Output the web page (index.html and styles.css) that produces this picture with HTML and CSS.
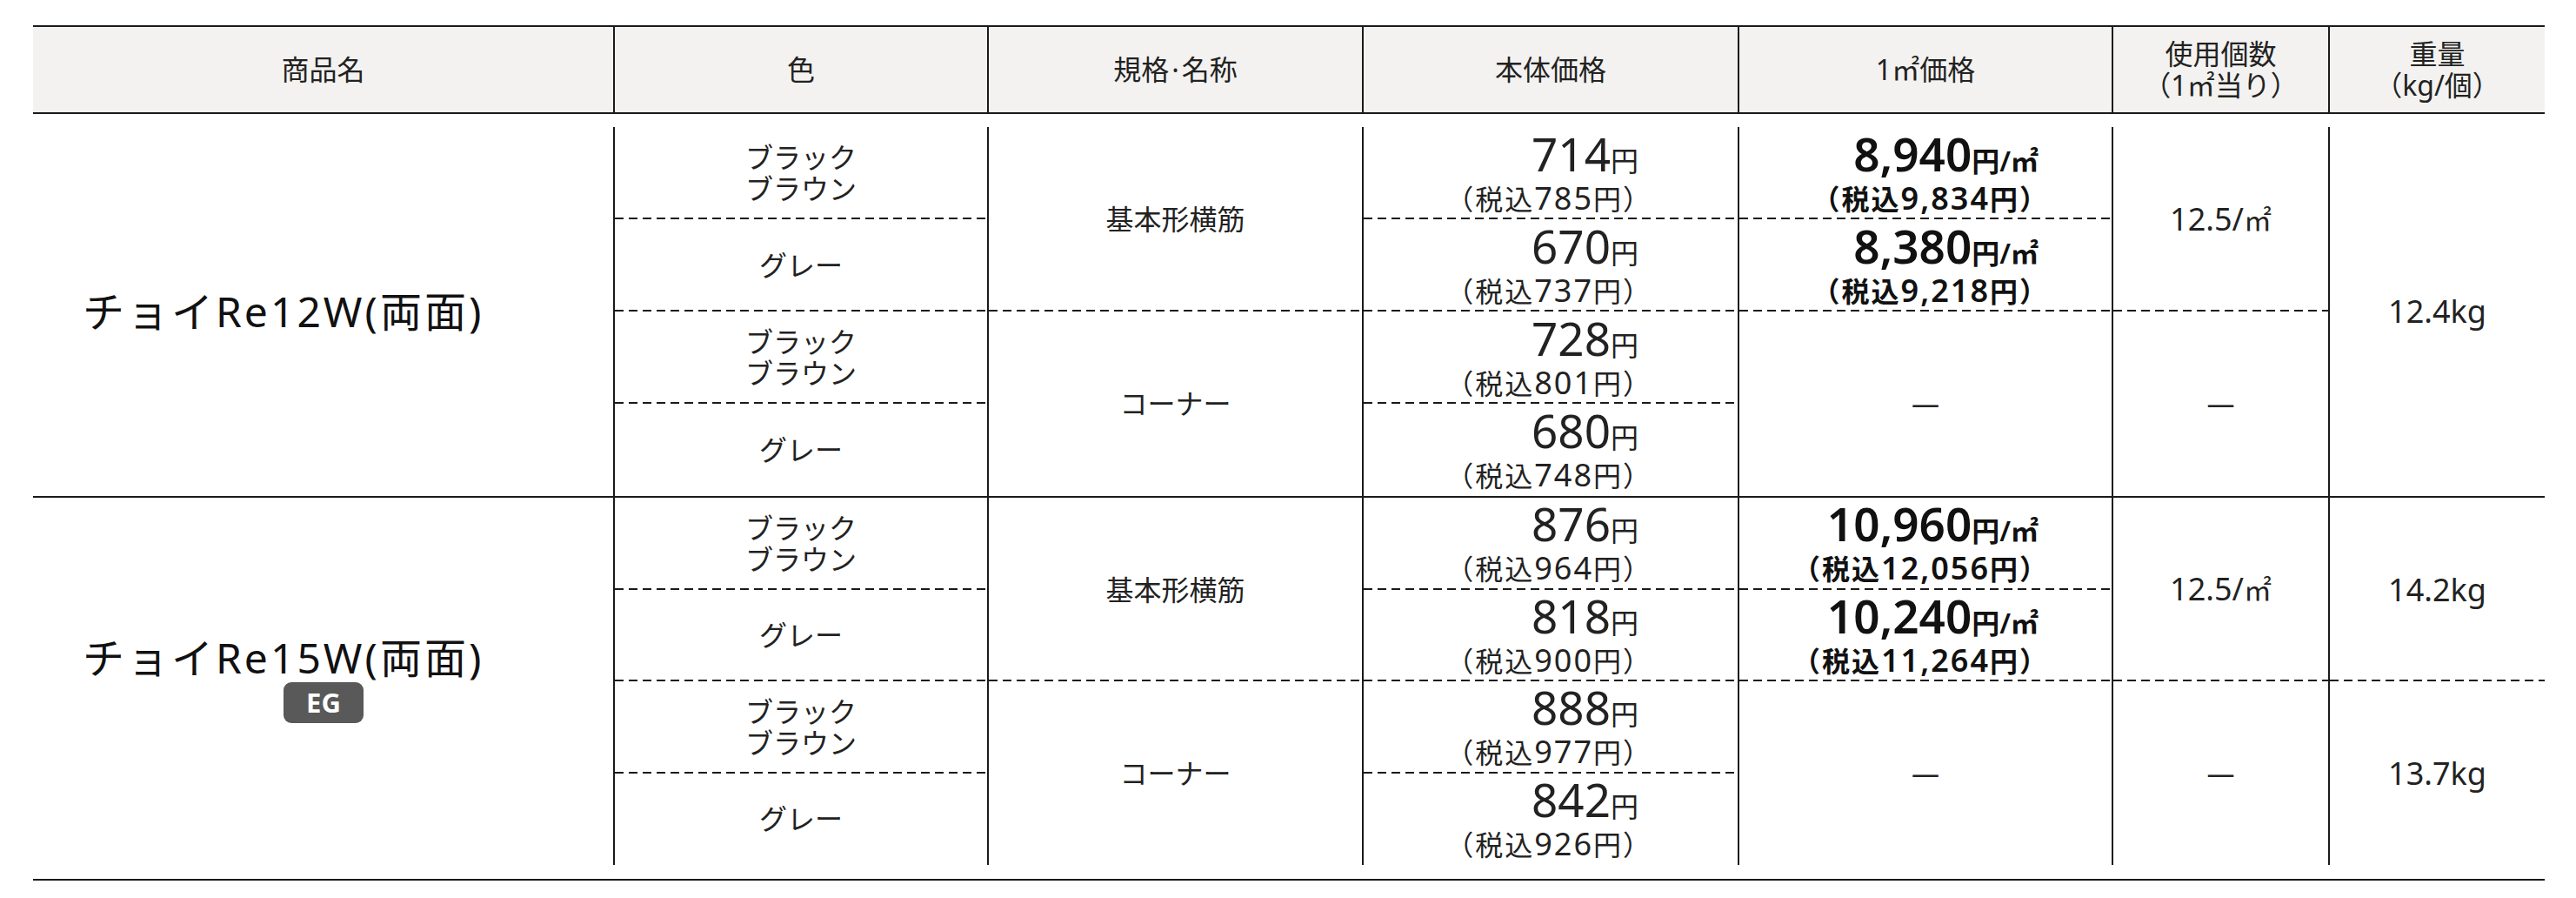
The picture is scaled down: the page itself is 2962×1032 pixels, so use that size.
FILE: index.html
```html
<!DOCTYPE html>
<html lang="ja">
<head>
<meta charset="utf-8">
<title>チョイRe 価格表</title>
<link rel="stylesheet" href="styles.css">
</head>
<body>
<div class="sheet">
  <div class="table">
    <div class="thead">
      <div class="th first"><span>商品名</span></div>
      <div class="th"><span>色</span></div>
      <div class="th"><span>規格<span class="dot">·</span>名称</span></div>
      <div class="th"><span>本体価格</span></div>
      <div class="th"><span>1㎡価格</span></div>
      <div class="th"><span>使用個数</span><span>（1㎡当り）</span></div>
      <div class="th"><span>重量</span><span>（kg/個）</span></div>
    </div>
    <div class="tbody">
      <div class="group g1">
        <div class="name c1 r14"><div class="pname">チョイRe12W(両面)</div></div>

        <div class="cell c2 r1 dash"><span>ブラック</span><span>ブラウン</span></div>
        <div class="cell c2 r2 dash"><span>グレー</span></div>
        <div class="cell c2 r3 dash"><span>ブラック</span><span>ブラウン</span></div>
        <div class="cell c2 r4"><span>グレー</span></div>

        <div class="cell c3 r12 dash"><span>基本形横筋</span></div>
        <div class="cell c3 r34"><span>コーナー</span></div>

        <div class="cell pr4 c4 r1 dash"><div class="pbox"><div class="big">714<span class="yen">円</span></div><div class="tax">（税込<span class="n">785</span>円）</div></div></div>
        <div class="cell pr4 c4 r2 dash"><div class="pbox"><div class="big">670<span class="yen">円</span></div><div class="tax">（税込<span class="n">737</span>円）</div></div></div>
        <div class="cell pr4 c4 r3 dash"><div class="pbox"><div class="big">728<span class="yen">円</span></div><div class="tax">（税込<span class="n">801</span>円）</div></div></div>
        <div class="cell pr4 c4 r4"><div class="pbox"><div class="big">680<span class="yen">円</span></div><div class="tax">（税込<span class="n">748</span>円）</div></div></div>

        <div class="cell pr5 c5 r1 dash"><div class="pbox bold"><div class="big">8,940<span class="yen">円/㎡</span></div><div class="tax">（税込<span class="n">9,834</span>円）</div></div></div>
        <div class="cell pr5 c5 r2 dash"><div class="pbox bold"><div class="big">8,380<span class="yen">円/㎡</span></div><div class="tax">（税込<span class="n">9,218</span>円）</div></div></div>
        <div class="cell c5 r34"><span>—</span></div>

        <div class="cell c6 r12 dash"><span class="v"><span class="n">12.5/</span>㎡</span></div>
        <div class="cell c6 r34"><span>—</span></div>

        <div class="cell c7 r14"><span class="n">12.4kg</span></div>
      </div>

      <div class="group g2">
        <div class="name c1 r14"><div class="pname">チョイRe15W(両面)</div><div class="badge">EG</div></div>

        <div class="cell c2 r1 dash"><span>ブラック</span><span>ブラウン</span></div>
        <div class="cell c2 r2 dash"><span>グレー</span></div>
        <div class="cell c2 r3 dash"><span>ブラック</span><span>ブラウン</span></div>
        <div class="cell c2 r4"><span>グレー</span></div>

        <div class="cell c3 r12 dash"><span>基本形横筋</span></div>
        <div class="cell c3 r34"><span>コーナー</span></div>

        <div class="cell pr4 c4 r1 dash"><div class="pbox"><div class="big">876<span class="yen">円</span></div><div class="tax">（税込<span class="n">964</span>円）</div></div></div>
        <div class="cell pr4 c4 r2 dash"><div class="pbox"><div class="big">818<span class="yen">円</span></div><div class="tax">（税込<span class="n">900</span>円）</div></div></div>
        <div class="cell pr4 c4 r3 dash"><div class="pbox"><div class="big">888<span class="yen">円</span></div><div class="tax">（税込<span class="n">977</span>円）</div></div></div>
        <div class="cell pr4 c4 r4"><div class="pbox"><div class="big">842<span class="yen">円</span></div><div class="tax">（税込<span class="n">926</span>円）</div></div></div>

        <div class="cell pr5 c5 r1 dash"><div class="pbox bold"><div class="big">10,960<span class="yen">円/㎡</span></div><div class="tax">（税込<span class="n">12,056</span>円）</div></div></div>
        <div class="cell pr5 c5 r2 dash"><div class="pbox bold"><div class="big">10,240<span class="yen">円/㎡</span></div><div class="tax">（税込<span class="n">11,264</span>円）</div></div></div>
        <div class="cell c5 r34"><span>—</span></div>

        <div class="cell c6 r12 dash"><span class="v"><span class="n">12.5/</span>㎡</span></div>
        <div class="cell c6 r34"><span>—</span></div>

        <div class="cell c7 r12 dash"><span class="n">14.2kg</span></div>
        <div class="cell c7 r34"><span class="n">13.7kg</span></div>
      </div>
    </div>
  </div>
</div>
</body>
</html>
```

FILE: styles.css
```css
* {
  box-sizing: border-box;
  margin: 0;
  padding: 0;
}

html, body {
  background: #ffffff;
}

body {
  font-family: "Noto Sans", "Noto Sans CJK JP", sans-serif;
  color: #222222;
}

.sheet {
  padding: 29px 36px 0 38px;
}

.table {
  width: 2888px;
  border-top: 2px solid #1a1a1a;
  border-bottom: 2px solid #1a1a1a;
}

.thead,
.group {
  display: grid;
  grid-template-columns: 667px 430px 431px 432px 430px 249px 249px;
}

.thead {
  height: 100px;
  background: #f3f2f0;
  border-bottom: 2px solid #1a1a1a;
}

.th {
  display: flex;
  flex-direction: column;
  align-items: center;
  justify-content: center;
  font-size: 32px;
  line-height: 36px;
  border-left: 2px solid #1a1a1a;
  white-space: nowrap;
}

.th.first {
  border-left: none;
}

.dot {
  padding: 0 3px;
}

.tbody {
  padding: 15px 0 16px;
}

.group.g1 {
  grid-template-rows: repeat(4, 106px);
  border-bottom: 2px solid #1a1a1a;
}

.group.g2 {
  grid-template-rows: repeat(4, 105.5px);
}

.c1 { grid-column: 1; }
.c2 { grid-column: 2; }
.c3 { grid-column: 3; }
.c4 { grid-column: 4; }
.c5 { grid-column: 5; }
.c6 { grid-column: 6; }
.c7 { grid-column: 7; }

.r1 { grid-row: 1; }
.r2 { grid-row: 2; }
.r3 { grid-row: 3; }
.r4 { grid-row: 4; }
.r12 { grid-row: 1 / 3; }
.r34 { grid-row: 3 / 5; }
.r14 { grid-row: 1 / 5; }

.cell {
  display: flex;
  flex-direction: column;
  align-items: center;
  justify-content: center;
  border-left: 2px solid #1a1a1a;
  font-size: 32px;
  line-height: 36px;
  text-align: center;
  white-space: nowrap;
}

.cell.pr4 {
  align-items: flex-end;
  padding-right: 114px;
}

.cell.pr5 {
  align-items: flex-end;
  padding-right: 84px;
}

.dash {
  background-image: linear-gradient(to right, #1a1a1a 10px, transparent 10px);
  background-size: 16px 2px;
  background-repeat: repeat-x;
  background-position: left bottom;
}

.name {
  display: flex;
  flex-direction: column;
  justify-content: center;
  padding-left: 57px;
}

.pname {
  font-size: 48px;
  line-height: 56px;
  letter-spacing: 3px;
  white-space: nowrap;
  color: #111111;
}

.badge {
  margin-top: 0;
  margin-bottom: 8px;
  margin-left: 231px;
  width: 92px;
  height: 47px;
  border-radius: 9px;
  background: #595959;
  color: #ffffff;
  font-size: 31px;
  font-weight: 700;
  line-height: 1;
  display: flex;
  align-items: center;
  justify-content: center;
}

.pbox {
  text-align: right;
  padding-top: 1px;
}

.big {
  font-size: 53px;
  line-height: 57px;
}

.yen {
  font-size: 32px;
  line-height: 1;
}

.tax {
  font-size: 32px;
  line-height: 47px;
  letter-spacing: 2px;
  margin-right: -16px;
}

.bold .tax {
  margin-right: -12px;
}

.tax .n {
  font-size: 36px;
  line-height: 1;
  letter-spacing: 2px;
}

.bold {
  font-weight: 600;
  color: #111111;
}

.cell .n {
  font-size: 36px;
}

.v {
  white-space: nowrap;
}
```
